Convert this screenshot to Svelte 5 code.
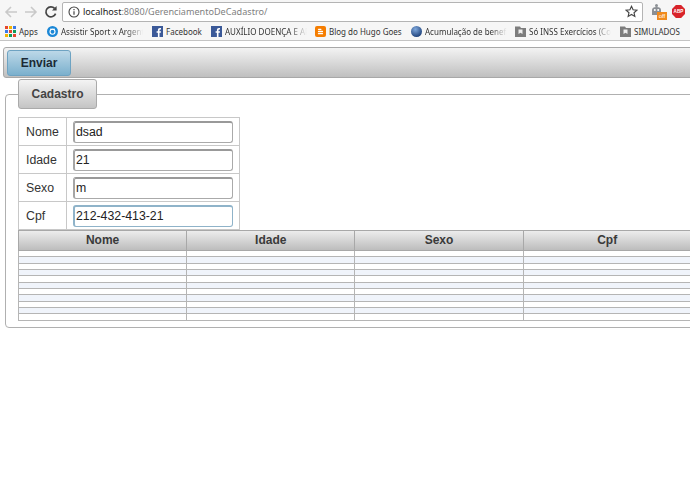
<script>
  const bookmarks = [
    { icon: 'apps', label: 'Apps', width: 42 },
    { icon: 'sport', label: 'Assistir Sport x Argentina', width: 105, fade: true },
    { icon: 'fb', label: 'Facebook', width: 59 },
    { icon: 'fb', label: 'AUXÍLIO DOENÇA E APOSENTADORIA', width: 104, fade: true },
    { icon: 'blog', label: 'Blog do Hugo Goes', width: 96 },
    { icon: 'globe', label: 'Acumulação de benefícios', width: 104, fade: true },
    { icon: 'folder', label: 'Só INSS Exercícios (Comentados)', width: 105, fade: true },
    { icon: 'folder', label: 'SIMULADOS', width: 66 }
  ];
  const appColors = ['#e5482d', '#f4b400', '#3b78e7', '#3b78e7', '#e5482d', '#0f9d58', '#f4b400', '#0f9d58', '#e5482d'];

  const fields = [
    { label: 'Nome', value: 'dsad' },
    { label: 'Idade', value: '21' },
    { label: 'Sexo', value: 'm' },
    { label: 'Cpf', value: '212-432-413-21', focused: true }
  ];
  const columns = ['Nome', 'Idade', 'Sexo', 'Cpf'];
  const rows = Array.from({ length: 11 }, (_, i) => i);
</script>

<div class="page">
  <div class="chrome">
    <div class="nav">
      <svg class="nav-icon" width="14" height="14" viewBox="0 0 14 14"><path d="M13 7H2M7 2 2 7l5 5" fill="none" stroke="#c9c9c9" stroke-width="1.6"/></svg>
      <svg class="nav-icon" width="14" height="14" viewBox="0 0 14 14"><path d="M1 7h11M7 2l5 5-5 5" fill="none" stroke="#c9c9c9" stroke-width="1.6"/></svg>
      <svg class="nav-icon" width="14" height="14" viewBox="0 0 14 14"><path d="M11.600 8.600A5 5 0 1 1 10.600 3.400" fill="none" stroke="#444" stroke-width="1.700"/><path d="M12.600 1v4.600H8z" fill="#444"/></svg>
      <div class="address">
        <svg width="12" height="12" viewBox="0 0 12 12"><circle cx="6" cy="6" r="5" fill="none" stroke="#444" stroke-width="1.100"/><path d="M6 5.200v3.600M6 3v1.200" stroke="#444" stroke-width="1.200"/></svg>
        <span class="url"><span class="host">localhost</span>:8080/GerenciamentoDeCadastro/</span>
        <svg class="star" width="13" height="13" viewBox="0 0 14 14"><path d="m7 1.400 1.700 3.800 4.100.4-3.100 2.700.9 4L7 10.200l-3.600 2.100.9-4-3.100-2.700 4.100-.4z" fill="none" stroke="#444" stroke-width="1.200"/></svg>
      </div>
      <div class="ext">
        <svg width="11" height="14" viewBox="0 0 11 14"><circle cx="5.500" cy="2.500" r="1.500" fill="#8b8f94"/><path d="M1 12V7Q1 4 5.500 4T10 7v5z" fill="#8b8f94"/><circle cx="3.800" cy="7" r="1" fill="#fff"/><circle cx="7.200" cy="7" r="1" fill="#fff"/></svg>
        <span class="off">off</span>
      </div>
      <svg class="abp" width="13" height="13" viewBox="0 0 14 14"><path d="M4.200 0h5.600L14 4.200v5.600L9.800 14H4.200L0 9.800V4.200z" fill="#d8232a"/><text x="7" y="9" text-anchor="middle">ABP</text></svg>
    </div>
    <div class="bookmarks">
      {#each bookmarks as b}
        <div class="bookmark" style="width: {b.width}px">
          {#if b.icon === 'apps'}
            <span class="apps-icon">
              {#each appColors as c}<i style="background: {c}"></i>{/each}
            </span>
          {:else if b.icon === 'fb'}
            <svg width="11" height="11" viewBox="0 0 11 11"><rect width="11" height="11" fill="#3b5998"/><path d="M7.500 11V6.800h1.300l.2-1.600H7.500v-1c0-.5.200-.8.800-.8H9V2a8 8 0 0 0-1.100-.1C6.700 1.900 5.900 2.600 5.900 4v1.200H4.600v1.600h1.300V11z" fill="#fff"/></svg>
          {:else if b.icon === 'blog'}
            <svg width="11" height="11" viewBox="0 0 11 11"><rect width="11" height="11" rx="2" fill="#f57d00"/><path d="M3.500 3.300h2.400M3.500 5.500h4M3.500 7.700h4" stroke="#fff" stroke-width="1.300" stroke-linecap="round"/></svg>
          {:else if b.icon === 'sport'}
            <svg width="11" height="11" viewBox="0 0 11 11"><circle cx="5.500" cy="5.500" r="5.500" fill="#1b87d6"/><circle cx="5.500" cy="5.800" r="2.500" fill="none" stroke="#fff" stroke-width="1.100"/><path d="M3 3.200h5" stroke="#fff"/></svg>
          {:else if b.icon === 'globe'}
            <svg width="11" height="11" viewBox="0 0 11 11"><defs><radialGradient id="gl" cx="0.4" cy="0.3" r="0.8"><stop offset="0" stop-color="#7fa8dc"/><stop offset="1" stop-color="#12356f"/></radialGradient></defs><circle cx="5.500" cy="5.500" r="5.500" fill="url(#gl)"/></svg>
          {:else}
            <svg width="11" height="11" viewBox="0 0 11 11"><path d="M0 .5h5L6 2h5v9H0z" fill="#7d7d7d"/><path d="M3.500 3.500h4v4.500L5.500 6.800 3.500 8z" fill="#eee"/></svg>
          {/if}
          <span class="bm-label" class:fade={b.fade}>{b.label}</span>
        </div>
      {/each}
    </div>
  </div>

  <div class="toolbar">
    <button class="send">Enviar</button>
  </div>

  <fieldset class="panel">
    <legend><span>Cadastro</span></legend>
    <table class="form">
      <tbody>
        {#each fields as f}
          <tr>
            <td class="lbl">{f.label}</td>
            <td class="val"><input class:focused={f.focused} value={f.value} /></td>
          </tr>
        {/each}
      </tbody>
    </table>
    <div class="grid">
      <div class="grid-head">
        {#each columns as c}<div class="th">{c}</div>{/each}
      </div>
      {#each rows as r}
        <div class="grid-row" class:alt={r % 2 === 1}>
          {#each columns as c}<div class="td"></div>{/each}
        </div>
      {/each}
    </div>
  </fieldset>
</div>

<style>
:global(body) {
  margin: 0;
  background: #fff;
  overflow: hidden;
}
.page {
  width: 690px;
  height: 488px;
  overflow: hidden;
  font-family: "Liberation Sans", Arial, sans-serif;
  color: #333;
}
.chrome {
  height: 40px;
  background: #f6f6f6;
  border-bottom: 1px solid #c4c4c4;
}
.nav {
  height: 23px;
  display: flex;
  align-items: center;
  padding-left: 4px;
}
.nav-icon {
  margin-right: 6px;
  flex: none;
}
.nav-icon:nth-child(3) {
  margin-right: 4px;
}
.address {
  width: 581px;
  height: 20px;
  box-sizing: border-box;
  background: #fff;
  border: 1px solid #b4b4b4;
  border-radius: 2px;
  display: flex;
  align-items: center;
  padding: 0 4px 0 5px;
  flex: none;
}
.url {
  margin-left: 3px;
  font-family: "Noto Sans", sans-serif;
  font-size: 9.1px;
  color: #808080;
  white-space: nowrap;
}
.host {
  color: #222;
}
.star {
  margin-left: auto;
}
.ext {
  position: relative;
  width: 20px;
  height: 18px;
  margin-left: 8px;
}
.off {
  position: absolute;
  left: 6px;
  top: 9px;
  width: 10px;
  height: 8px;
  background: #f08a1d;
  color: #fff;
  font-size: 6px;
  line-height: 8px;
  text-align: center;
}
.abp {
  margin-left: 1px;
}
.abp text {
  fill: #fff;
  font-size: 5px;
  font-weight: bold;
}
.bookmarks {
  height: 17px;
  display: flex;
  align-items: center;
  padding-left: 5px;
}
.bookmark {
  display: flex;
  align-items: center;
  gap: 3px;
  flex: none;
  overflow: hidden;
}
.bookmark svg {
  flex: none;
}
.apps-icon {
  width: 11px;
  height: 11px;
  flex: none;
  display: grid;
  grid-template-columns: repeat(3, 3px);
  grid-auto-rows: 3px;
  gap: 1px;
}
.bm-label {
  font-family: "Noto Sans", sans-serif;
  font-size: 8px;
  color: #333;
  white-space: nowrap;
  overflow: hidden;
  flex: 1;
  min-width: 0;
}
.bm-label.fade {
  flex: none;
  width: 82px;
  -webkit-mask-image: linear-gradient(to right, #000 80%, transparent);
  mask-image: linear-gradient(to right, #000 80%, transparent);
}
.toolbar {
  height: 31px;
  margin: 6px 0 0 3px;
  width: 700px;
  box-sizing: border-box;
  background: linear-gradient(#f3f3f3, #bfbfbf);
  border: 1px solid #a8a8a8;
  border-radius: 3px;
  padding: 2px 3px;
}
.send {
  display: block;
  width: 64px;
  height: 26px;
  padding: 0;
  background: linear-gradient(#bcd8e8, #7bb0cd);
  border: 1px solid #6ea3c2;
  border-radius: 3px;
  font-family: inherit;
  font-size: 12px;
  font-weight: bold;
  color: #1c2a36;
}
.panel {
  width: 700px;
  height: 249px;
  box-sizing: border-box;
  margin: 1px 0 0 5px;
  padding: 0 0 0 12px;
  border: 1px solid #b0b0b0;
  border-radius: 4px;
}
legend {
  width: 79px;
  height: 30px;
  box-sizing: border-box;
  margin-left: 0;
  padding: 0;
  background: linear-gradient(#f4f4f4, #c4c4c4);
  border: 1px solid #aaa;
  border-radius: 3px;
}
legend span {
  display: block;
  text-align: center;
  font-size: 12px;
  font-weight: bold;
  line-height: 28px;
  color: #444;
}
.form {
  border-collapse: collapse;
  margin-top: 8px;
  width: 222px;
}
.form td {
  border: 1px solid #c8c8c8;
  padding: 0;
  height: 27px;
  font-size: 12.3px;
  color: #333;
}
.lbl {
  width: 40px;
  padding-left: 7px !important;
}
.val {
  padding-left: 6px !important;
}
input {
  display: block;
  width: 160px;
  height: 22px;
  box-sizing: border-box;
  padding: 0 1px;
  border: 1px solid #aaa;
  border-top: 2px solid #999;
  border-left: 2px solid #a5a5a5;
  border-radius: 3px;
  font-family: inherit;
  font-size: 12.3px;
  color: #222;
  outline: none;
}
input.focused {
  border-color: #8fb3c9;
}
.grid {
  width: 692px;
}
.grid-head {
  display: grid;
  grid-template-columns: repeat(4, 168.2px);
  height: 21px;
  background: linear-gradient(#ececec, #bdbdbd);
  border-top: 1px solid #a8a8a8;
  border-bottom: 1px solid #a8a8a8;
  box-sizing: border-box;
  border-left: 1px solid #a8a8a8;
}
.th {
  border-right: 1px solid #a8a8a8;
  text-align: center;
  font-size: 12px;
  font-weight: bold;
  line-height: 19px;
  color: #3a3a3a;
}
.grid-row {
  display: grid;
  grid-template-columns: repeat(4, 168.2px);
  height: 6.33px;
  box-sizing: border-box;
  background: #fff;
  border-left: 1px solid #b5b5b5;
  border-bottom: 1px solid #b5b5b5;
}
.grid-row.alt {
  background: #f0f4fb;
}
.td {
  border-right: 1px solid #b5b5b5;
}
</style>
